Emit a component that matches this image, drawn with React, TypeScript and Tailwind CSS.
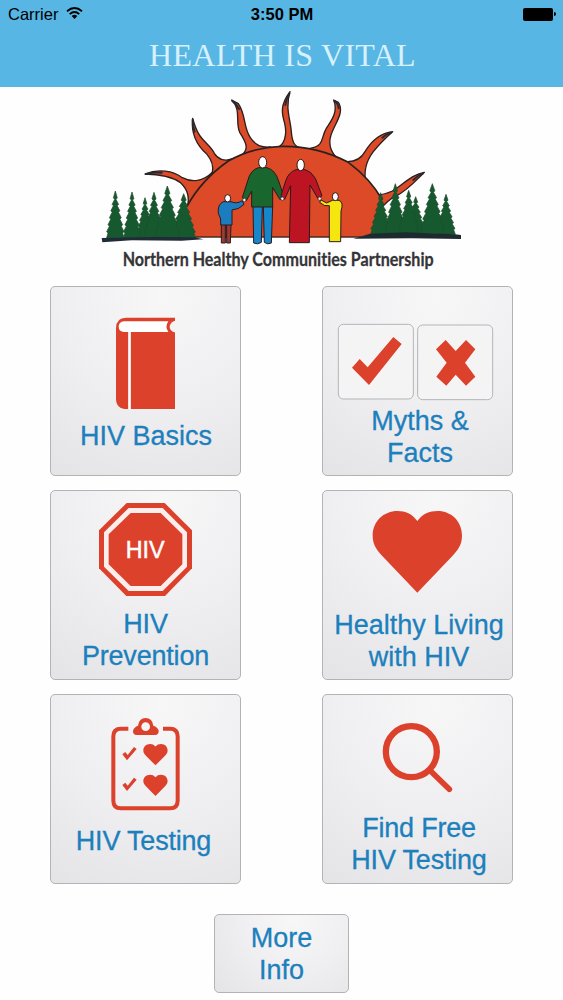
import React from 'react';

const RED = '#dc412b';
const HEART =
  'M307 108 C290 86 272 78 248 78 C205 78 173 110 173 152 C173 180 187 197 204 215 L307 323 L410 215 C427 197 441 180 441 152 C441 110 410 78 368 78 C342 78 324 86 307 108 Z';

interface TreeProps {
  x: number;
  top: number;
  base: number;
  w: number;
}

const Tree: React.FC<TreeProps> = ({ x, top, base, w }) => {
  const h = base - top;
  const steps = [0.12, 0.26, 0.4, 0.55, 0.7, 0.85];
  const spread = (s: number) => w * Math.min(1, 0.06 + s * 1.02);
  const right = steps.map((s) => `${x + spread(s) + 1},${top + h * s} ${x + spread(s) - 3},${top + h * (s + 0.03)}`);
  const left = steps.map((s) => `${x - spread(s) + 3},${top + h * (s + 0.03)} ${x - spread(s) - 1},${top + h * s}`).reverse();
  return (
    <polygon
      points={`${x},${top - 4} ${right.join(' ')} ${x + w},${base} ${x - w},${base} ${left.join(' ')}`}
      fill="#17592f"
      stroke="#1d4a2b"
      strokeWidth="2"
      strokeLinejoin="round"
    />
  );
};

const leftTrees: TreeProps[] = [
  { x: 150, top: 342, base: 459, w: 25 },
  { x: 61, top: 322, base: 461, w: 27 },
  { x: 111, top: 325, base: 460, w: 26 },
  { x: 177, top: 326, base: 459, w: 29 },
  { x: 266, top: 330, base: 461, w: 37 },
  { x: 217, top: 307, base: 459, w: 37 },
];

const rightTrees: TreeProps[] = [
  { x: 962, top: 339, base: 446, w: 28 },
  { x: 857, top: 327, base: 450, w: 31 },
  { x: 901, top: 300, base: 448, w: 31 },
  { x: 941, top: 320, base: 447, w: 30 },
  { x: 1053, top: 332, base: 448, w: 28 },
  { x: 1012, top: 300, base: 446, w: 36 },
];

const Logo = () => (
  <svg viewBox="0 6 1125 564" className="ml-[95px] h-[188px] w-[375px] shrink-0">
    {/* sun rays */}
    <g fill="#dc4a28" stroke="#2b201d" strokeWidth="4" strokeLinejoin="round">
      <path d="M150 267 C190 250 235 258 262 278 C290 293 325 290 352 262 L360 330 L277 364 C285 335 275 310 255 292 C230 275 195 268 150 267 Z" />
      <path d="M293 100 C287 150 310 185 336 208 C350 225 357 240 352 264 L380 290 L410 222 C388 230 368 222 358 205 C350 185 325 170 312 148 C304 135 298 118 293 100 Z" />
      <path d="M410 45 C440 75 420 110 434 142 C452 170 464 192 440 210 L480 240 L527 186 C500 188 482 182 466 158 C444 125 454 92 430 56 Z" />
      <path d="M585 20 C555 60 560 85 569 115 C577 150 568 182 545 187 L580 220 L620 190 C598 186 591 170 589 140 C586 100 570 70 585 20 Z" />
      <path d="M716 45 C730 80 710 105 694 130 C676 160 690 182 645 190 L680 230 L735 226 C710 208 698 180 708 150 C720 115 750 80 730 52 Z" />
      <path d="M893 140 C850 145 825 175 810 200 C795 228 765 235 728 226 L770 290 L814 300 C804 260 812 230 835 200 C852 178 870 160 893 140 Z" />
      <path d="M988 262 C945 270 925 300 892 318 C870 328 855 332 840 328 L850 380 C870 355 882 342 900 335 C935 318 960 290 988 262 Z" />
    </g>
    {/* dark ray tips */}
    <g fill="none" stroke="#252a33" strokeWidth="6" strokeLinecap="round">
      <path d="M153 267 Q175 261 200 263" />
      <path d="M293 104 Q293 122 299 140" />
      <path d="M412 48 Q425 57 432 72" />
      <path d="M583 26 Q573 42 571 60" />
      <path d="M719 48 Q730 56 731 70" />
      <path d="M888 143 Q873 148 862 158" />
      <path d="M984 265 Q967 272 955 285" />
    </g>
    <path
      d="M302 456 C272 420 268 382 276 364 C300 320 340 270 400 228 C450 200 500 186 560 184 C640 183 700 200 760 232 C800 262 840 305 862 345 L830 456 Z"
      fill="#dc4a28"
    />
    <path
      d="M276 364 C300 320 340 270 400 228 C450 200 500 186 560 184 C640 183 700 200 760 232 C800 262 840 305 862 345"
      fill="none"
      stroke="#2b201d"
      strokeWidth="5"
    />
    <path d="M295 456 H800" stroke="#4b2a22" strokeWidth="4" />
    {leftTrees.map((t) => (
      <Tree key={t.x} {...t} />
    ))}
    {rightTrees.map((t) => (
      <Tree key={t.x} {...t} />
    ))}
    <path d="M20 459 L180 456 L300 457 L325 463 L260 467 L110 466 L22 472 Z" fill="#1f2c38" />
    <path d="M775 461 L825 446 L930 442 L1080 448 L1098 450 V462 L950 460 Z" fill="#1d2b31" />

    {/* family */}
    <g stroke="#2a1a1c" strokeWidth="3" strokeLinejoin="round">
      <path d="M379 418 H391 V474 H379 Z M395 418 H408 L406 474 H395 Z" fill="#9c3b33" />
      <path d="M385 350 Q367 358 370 385 L377 402 V420 H411 V375 Q432 374 447 358 L442 347 Q425 358 408 350 Z" fill="#1c7cc0" />
      <ellipse cx="398" cy="340" rx="9" ry="11" fill="#fff" />
      <path d="M474 364 H502 L499 472 Q488 480 476 474 Z M505 364 H533 L529 474 Q518 480 508 472 Z" fill="#1787cc" />
      <path d="M490 248 Q466 255 458 288 L442 338 L454 347 L470 318 V366 H533 V308 L555 344 L567 336 L551 288 Q541 255 516 248 Z" fill="#19662f" />
      <ellipse cx="503" cy="232" rx="12" ry="17" fill="#fff" />
      <path d="M603 254 Q580 262 572 288 L558 332 L569 343 L587 302 L583 473 H643 L645 300 L669 341 L681 332 L661 280 Q648 258 630 254 Z" fill="#bd1423" />
      <ellipse cx="617" cy="240" rx="11" ry="17" fill="#fff" />
      <path d="M712 346 L695 354 L678 345 L674 352 Q688 366 703 362 V470 H737 L738 378 Q747 352 732 346 Z" fill="#f6e60f" />
      <ellipse cx="721" cy="335" rx="9" ry="12" fill="#fff" />
    </g>
    <g fill="#fff" stroke="#2a1a1c" strokeWidth="2">
      <circle cx="448" cy="345" r="5" />
      <circle cx="562" cy="341" r="5" />
      <circle cx="674" cy="341" r="5" />
    </g>

    <text
      x="83"
      y="543"
      textLength="933"
      lengthAdjust="spacingAndGlyphs"
      fontFamily="Lato, sans-serif"
      fontWeight="700"
      fontSize="54"
      fill="#353436"
      stroke="#353436"
      strokeWidth="0.8"
      className="[font-variant-ligatures:none]"
    >
      Northern Healthy Communities Partnership
    </text>
  </svg>
);

const BookIcon = () => (
  <svg viewBox="36 21 564 399" className="h-[133px] w-[188px] shrink-0">
    <path d="M405 113 H258 Q228 113 228 145 V356 Q228 387 262 387 H405 Z" fill={RED} />
    <path d="M252 124 H385 Q374 140 385 156 H252 Q236 154 236 140 Q236 126 252 124 Z" fill="#fff" />
    <path d="M407 123 H402 Q389 131 389 140 Q389 151 402 157 H407 Z" fill="#f3f3f4" />
    <path d="M268.500 152 V388" stroke="#fff" strokeWidth="8" />
  </svg>
);

const MythsIcon = () => (
  <svg viewBox="27 21 564 354" className="h-[118px] w-[188px] shrink-0">
    <g fill="#f4f4f5" stroke="#b5b5b8" strokeWidth="3">
      <rect x="70" y="133" width="225" height="224" rx="15" />
      <rect x="308" y="135" width="225" height="224" rx="15" />
    </g>
    <polygon points="111,263 134,237 158,262 235,171 260,192 162,315" fill={RED} />
    <polygon points="392,180 422,213 453,180 481,208 450,248 481,290 453,317 422,284 394,317 364,290 395,248 363,208" fill={RED} />
  </svg>
);

const StopIcon = () => (
  <svg viewBox="36 18 564 351" className="h-[117px] w-[188px] shrink-0">
    <polygon points="260,54 374,54 456,136 456,250 375,333 259,333 177,250 177,136" fill={RED} />
    <polygon points="266,69 368,69 441,142 441,245 368,318 266,318 192,245 192,142" fill="#fbeeed" />
    <polygon points="272,84 362,84 427,148 427,238 362,303 272,303 206,238 206,148" fill={RED} />
    <text x="257" y="219" textLength="117" lengthAdjust="spacingAndGlyphs" fontFamily="Liberation Sans, sans-serif" fontSize="74" fill="#fff" stroke="#fff" strokeWidth="1.500">
      HIV
    </text>
  </svg>
);

const HeartIcon = () => (
  <svg viewBox="27 18 564 354" className="h-[118px] w-[188px] shrink-0">
    <path d={HEART} fill={RED} />
  </svg>
);

const ClipboardIcon = () => (
  <svg viewBox="36 15 564 390" className="h-[130px] w-[188px] shrink-0">
    <path
      d="M265 116 H243 Q220 116 220 139 V332 Q220 355 243 355 H390 Q413 355 413 332 V139 Q413 116 390 116 H369"
      fill="none"
      stroke={RED}
      strokeWidth="12"
    />
    <path
      d="M290 135 Q278 134 279 122 Q282 111 294 107 Q297 84 317 84 Q337 84 340 107 Q353 111 356 122 Q357 134 345 135 Z M317 97 A13 13 0 1 0 317 123 A13 13 0 1 0 317 97 Z"
      fill={RED}
      fillRule="evenodd"
    />
    {[0, 92].map((dy) => (
      <g key={dy} transform={`translate(0 ${dy})`} fill={RED}>
        <polygon points="247,193 256,186 263,195 282,171 290,177 261,211" />
        <path d={HEART} transform="translate(262.900 141.600) scale(0.272 0.261)" />
      </g>
    ))}
  </svg>
);

const SearchIcon = () => (
  <svg viewBox="27 15 564 351" className="h-[117px] w-[188px] shrink-0">
    <circle cx="289" cy="185" r="76.500" fill="none" stroke={RED} strokeWidth="19" />
    <path d="M346 242 L403 298" stroke={RED} strokeWidth="17" strokeLinecap="round" />
  </svg>
);

const tiles = [
  { icon: <BookIcon />, lines: ['HIV Basics'], labelStyle: 'pl-px' },
  { icon: <MythsIcon />, lines: ['Myths &', 'Facts'], labelStyle: 'pl-[5px]' },
  { icon: <StopIcon />, lines: ['HIV', 'Prevention'], labelStyle: 'tracking-[-0.2px]' },
  { icon: <HeartIcon />, lines: ['Healthy Living', 'with HIV'], labelStyle: 'pl-[3px]' },
  { icon: <ClipboardIcon />, lines: ['HIV Testing'], labelStyle: 'pr-1 tracking-[-0.2px]' },
  { icon: <SearchIcon />, lines: ['Find Free', 'HIV Testing'], labelStyle: 'pl-[3px] tracking-[-0.2px]' },
];

const buttonStyle =
  'flex flex-col items-center rounded-[5px] border border-[#b3b3b6] bg-[radial-gradient(circle_at_60%_5%,#f7f7f8_0%,#efeff1_50%,#e4e3e5_100%)] text-[27px] leading-[31.5px] text-[#1c80bd] [-webkit-text-stroke:0.3px_#1c80bd]';

interface LabelProps {
  lines: string[];
  className?: string;
}

const Label: React.FC<LabelProps> = ({ lines, className = '' }) => (
  <span className={`flex flex-col items-center pt-px whitespace-nowrap ${className}`}>
    {lines.map((line) => (
      <span key={line}>{line}</span>
    ))}
  </span>
);

export default function App() {
  return (
    <div className="flex h-[1000px] w-[563px] flex-col overflow-hidden bg-[#fefefe] font-['Liberation_Sans',Arial,sans-serif]">
      <header className="h-[87px] shrink-0 bg-[#57b6e3]">
        <div className="grid h-7 grid-cols-3 items-center pr-[7px] pl-2 text-black">
          <div className="flex items-center gap-2 text-[16.5px]">
            <span>Carrier</span>
            <svg viewBox="0 0 17 12" className="mb-0.5 h-3 w-[17px]">
              <path d="M1 4.200 Q8.500 -2 16 4.200" fill="none" stroke="#000" strokeWidth="1.900" />
              <path d="M3.700 7.100 Q8.500 3 13.300 7.100" fill="none" stroke="#000" strokeWidth="1.900" />
              <path d="M5.700 9 Q8.500 6.600 11.300 9 L8.500 12 Z" />
            </svg>
          </div>
          <span className="text-center text-[16.5px] font-bold">3:50 PM</span>
          <div className="flex items-center justify-end gap-px">
            <span className="h-[13px] w-[30px] rounded-[2px] bg-black" />
            <span className="h-1 w-0.5 rounded-r-full bg-black" />
          </div>
        </div>
        <h1 className="pt-2 pl-0.5 text-center font-['Liberation_Serif',serif] text-[32px] leading-[38px] font-normal tracking-[0.3px] whitespace-nowrap text-[#d6f1fb]">
          HEALTH IS VITAL
        </h1>
      </header>

      <Logo />

      <main className="mt-[11px] ml-[50px] grid shrink-0 grid-cols-[191px_191px] gap-x-[81px] gap-y-[14px]">
        {tiles.map((tile) => (
          <button key={tile.lines.join(' ')} className={`${buttonStyle} h-[190px] w-[191px]`}>
            {tile.icon}
            <Label lines={tile.lines} className={tile.labelStyle} />
          </button>
        ))}
      </main>

      <button className={`${buttonStyle} mt-[30px] ml-[214px] h-[79px] w-[135px] shrink-0 pt-[7px]`}>
        <Label lines={['More', 'Info']} />
      </button>
    </div>
  );
}
